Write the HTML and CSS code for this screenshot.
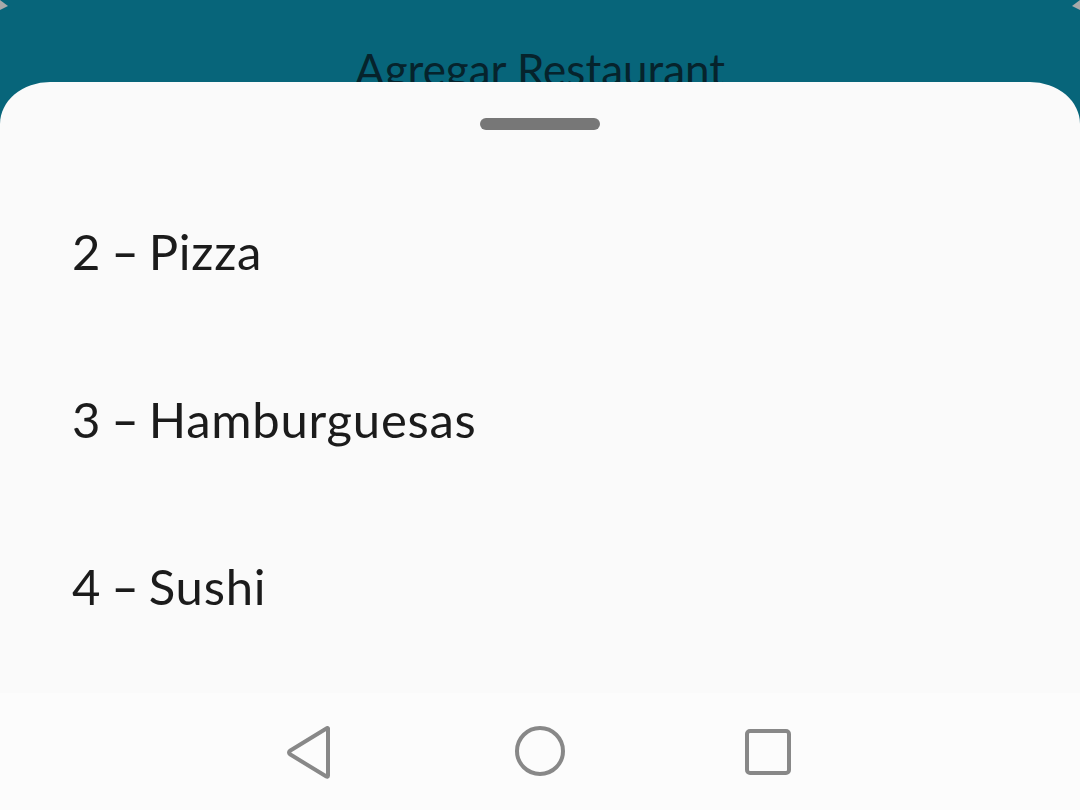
FILE: index.html
```html
<!DOCTYPE html>
<html lang="es">
<head>
<meta charset="utf-8">
<title>Agregar Restaurant</title>
<link rel="stylesheet" href="styles.css">
</head>
<body>
<div class="screen">
  <header class="appbar">
    <h1 class="appbar-title">Agregar Restaurant</h1>
  </header>
  <section class="sheet">
    <div class="handle"></div>
    <ul class="options">
      <li class="option">2 <span class="sep">-</span> Pizza</li>
      <li class="option">3 <span class="sep">-</span> Hamburguesas</li>
      <li class="option">4 <span class="sep">-</span> Sushi</li>
    </ul>
  </section>
  <nav class="navbar">
    <svg class="nav-icon" width="48" height="56" viewBox="0 0 48 56"><path d="M41 4.5 L41 51.5 Q41 53.5 39 52.3 L3 30.3 Q1 28.5 3 26.7 L39 4.7 Q41 3.5 41 4.5 Z" fill="none" stroke="#888" stroke-width="4" stroke-linejoin="round"/></svg>
    <svg class="nav-icon" width="54" height="54" viewBox="0 0 54 54"><circle cx="27" cy="27" r="23" fill="none" stroke="#888" stroke-width="4"/></svg>
    <svg class="nav-icon" width="48" height="48" viewBox="0 0 48 48"><rect x="3" y="3" width="42" height="42" rx="3" fill="none" stroke="#888" stroke-width="4"/></svg>
  </nav>
  <div class="corner corner-tl"></div>
  <div class="corner corner-tr"></div>
</div>
</body>
</html>
```

FILE: styles.css
```css
* { box-sizing: border-box; }
html, body { margin: 0; padding: 0; }
body {
  width: 1080px;
  height: 810px;
  overflow: hidden;
  font-family: "Lato", "Noto Sans", "Liberation Sans", sans-serif;
  background: #07657a;
}
.screen {
  position: relative;
  width: 1080px;
  height: 810px;
  display: flex;
  flex-direction: column;
  background: #07657a;
}
.appbar {
  height: 82px;
  overflow: hidden;
  display: flex;
  justify-content: center;
}
.appbar-title {
  margin: 0;
  padding-top: 41px;
  font-weight: 400;
  font-size: 44px;
  line-height: 56px;
  color: #06232c;
  white-space: nowrap;
}
.sheet {
  flex: 1;
  background: #fafafa;
  border-radius: 50px 50px 0 0 / 42px 42px 0 0;
  display: flex;
  flex-direction: column;
  align-items: center;
  padding-top: 36px;
}
.handle {
  width: 120px;
  height: 12px;
  border-radius: 6px;
  background: #777777;
}
.options {
  list-style: none;
  margin: 40px 0 0;
  padding: 0;
  align-self: stretch;
}
.option {
  height: 167.5px;
  line-height: 162.5px;
  padding-left: 72px;
  font-size: 49px;
  letter-spacing: 0.75px;
  word-spacing: -2.5px;
  color: #1b1b1b;
  white-space: nowrap;
}
.sep {
  display: inline-block;
  width: 26px;
  text-align: center;
  letter-spacing: 0;
  transform: scaleX(1.55);
}
.navbar {
  height: 117px;
  background: #fcfcfc;
  display: flex;
  align-items: center;
  justify-content: center;
  padding-bottom: 1px;
}
.nav-icon { display: block; flex: none; }
.nav-icon:nth-child(1) { margin-right: 178px; margin-top: 2px; margin-left: 2px; }
.nav-icon:nth-child(3) { margin-left: 177px; margin-top: 2px; margin-right: 4px; }
.corner {
  position: absolute;
  top: 0;
  width: 8px;
  height: 10px;
  background: #a9a9a9;
}
.corner-tl { left: 0; clip-path: polygon(0 0, 100% 60%, 0 100%); }
.corner-tr { right: 0; clip-path: polygon(100% 0, 0 60%, 100% 100%); }
```
